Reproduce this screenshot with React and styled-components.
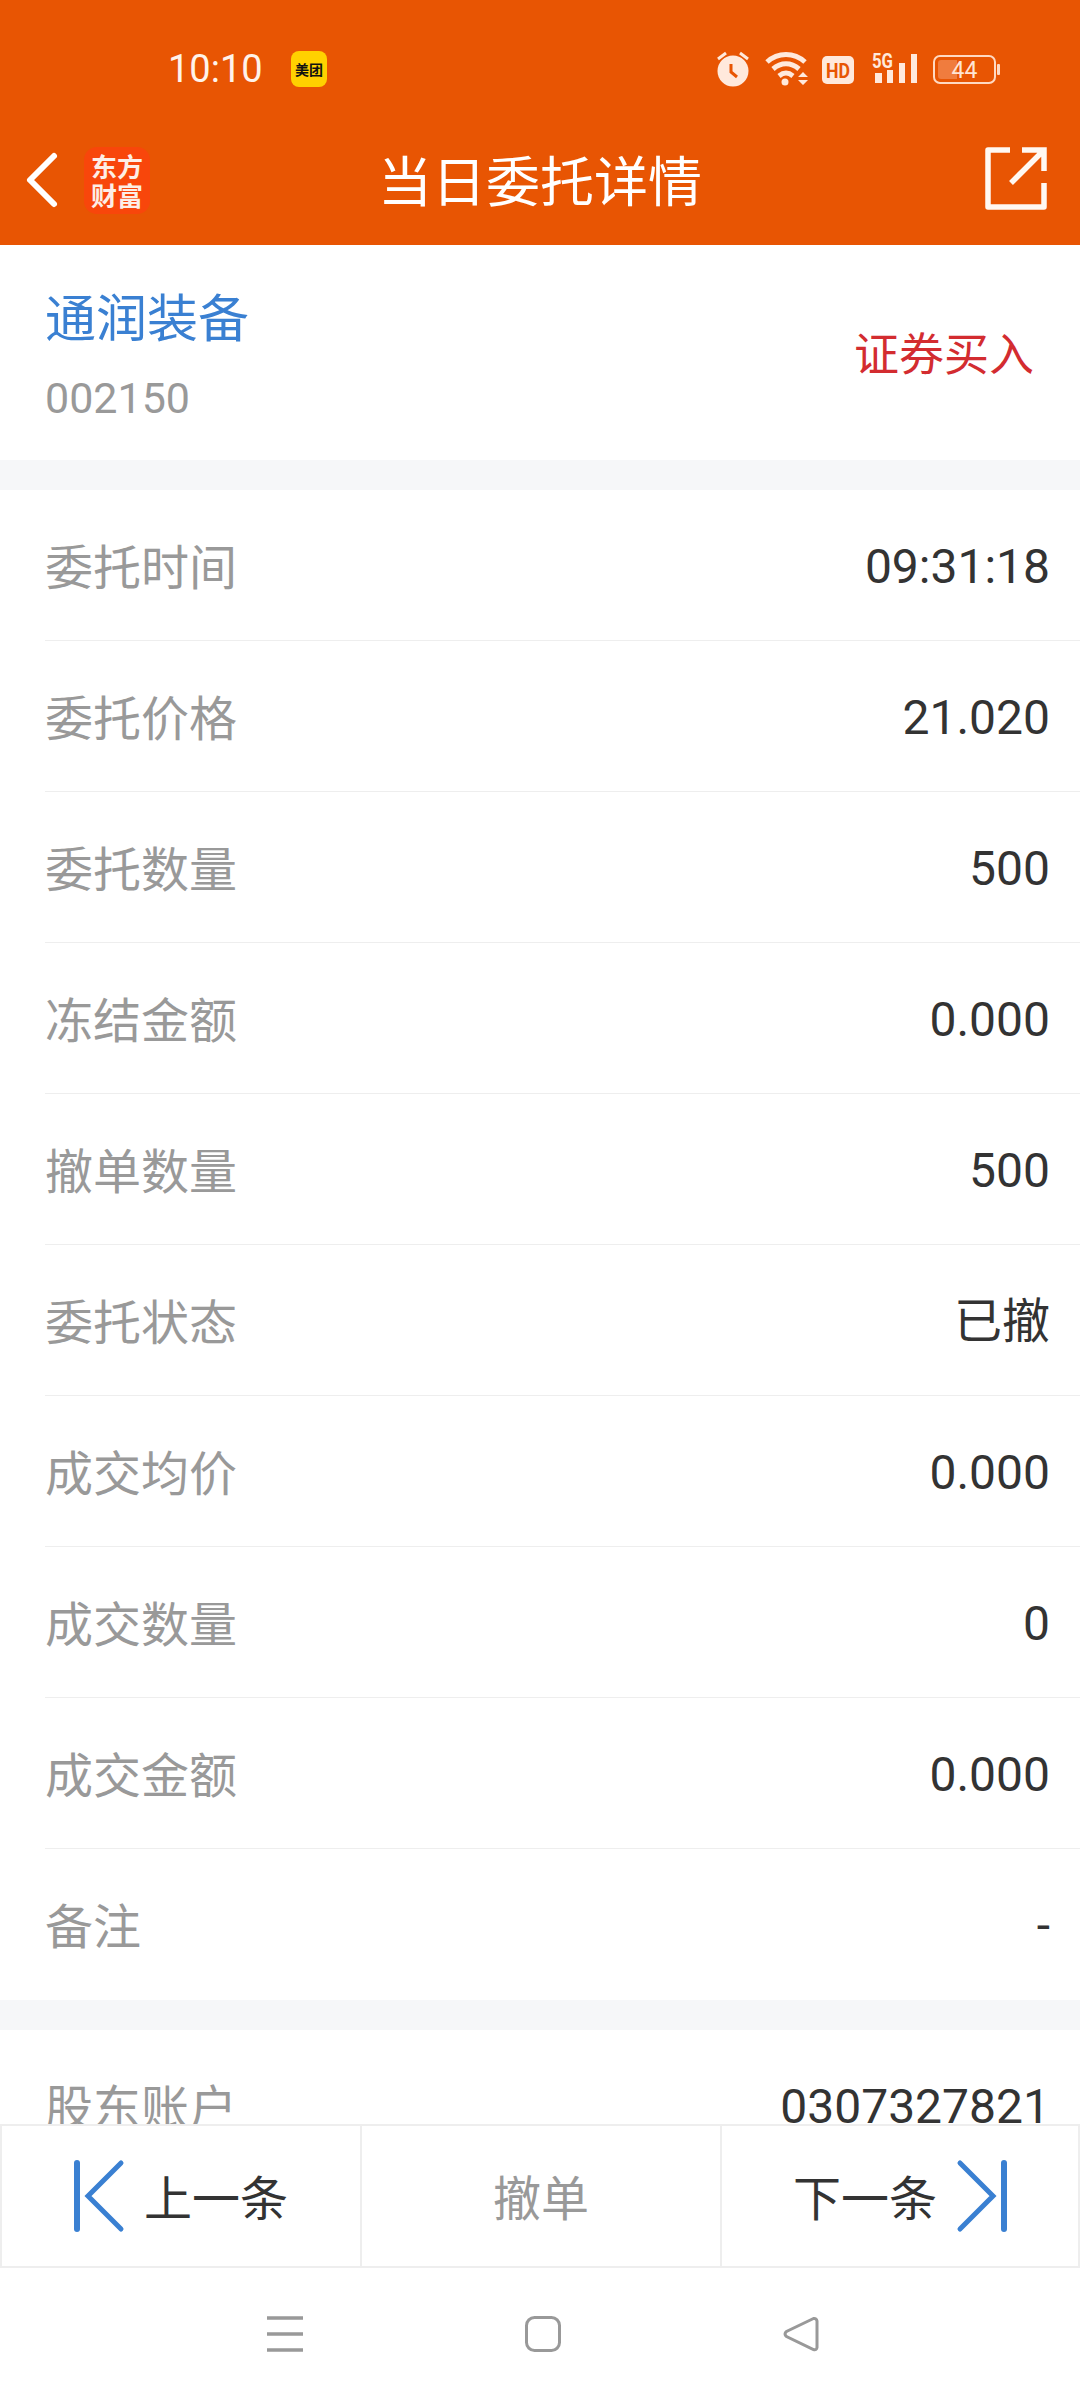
import React from 'react'
import styled, { createGlobalStyle } from 'styled-components'

const GlobalStyle = createGlobalStyle`
  html, body { margin: 0; padding: 0; background: #fff; }
  body { font-family: Roboto, "Noto Sans CJK SC", sans-serif; }
  svg { overflow: visible; }
`
const Page = styled.div`
  width: 1080px;
  height: 2400px;
  display: flex;
  flex-direction: column;
  overflow: hidden;
  background: #fff;
`
const Header = styled.header`
  height: 245px;
  flex: none;
  background: #e85503;
  color: #fff;
`
const StatusBar = styled.div`
  height: 115px;
  display: flex;
  align-items: flex-start;
  padding: 51px 0 0 168px;
  box-sizing: border-box;
`
const Clock = styled.span`
  font-size: 38px;
  line-height: 36px;
  width: 123px;
  color: #fff3ea;
`
const AppBadge = styled.span`
  width: 36px;
  height: 36px;
  border-radius: 8px;
  background: #ffd100;
  color: #111;
  font-size: 14px;
  font-weight: 700;
  line-height: 36px;
  text-align: center;
  white-space: nowrap;
  font-family: "Noto Sans CJK SC", sans-serif;
`
const StatusIcons = styled.div`
  margin-left: auto;
  margin-right: 80px;
  display: flex;
  align-items: flex-start;
  height: 36px;
`
const ToolBar = styled.div`
  height: 130px;
  display: grid;
  grid-template-columns: 1fr auto 1fr;
  align-items: center;
`
const ToolLeft = styled.div`
  display: flex;
  align-items: center;
  padding-left: 27px;
  gap: 27px;
`
const BrandLogo = styled.div`
  width: 66px;
  height: 67px;
  border-radius: 13px;
  background: #f8460b;
  color: #fdeee6;
  font: 700 26px/29px "Noto Sans CJK SC", sans-serif;
  text-align: center;
  white-space: pre-line;
  padding-top: 4px;
  box-sizing: border-box;
`
const Title = styled.h1`
  margin: 0 0 2px;
  font: 400 54px/64px "Noto Sans CJK SC", sans-serif;
  color: #fff;
`
const ToolRight = styled.div`
  display: flex;
  justify-content: flex-end;
  padding: 0 33px 4px 0;
`
const Scroll = styled.main`
  flex: 1;
  min-height: 0;
  overflow: hidden;
`
const StockCard = styled.section`
  height: 215px;
  display: flex;
  align-items: center;
  justify-content: space-between;
  padding: 0 45px;
  box-sizing: border-box;
`
const StockName = styled.div`
  font: 400 51px/60px "Noto Sans CJK SC", sans-serif;
  color: #3a80d2;
  padding-top: 2px;
  margin-bottom: 4px;
`
const StockCode = styled.div`
  font-size: 43px;
  line-height: 50px;
  margin-top: 28px;
  color: #999;
`
const TradeType = styled.div`
  font: 400 45px/52px "Noto Sans CJK SC", sans-serif;
  color: #d32c30;
  margin-right: 1px;
  padding-bottom: 2px;
`
const Gap = styled.div`
  height: ${p => p.$h}px;
  background: #f6f7f9;
`
const Row = styled.div`
  height: 151px;
  box-sizing: border-box;
  margin-left: 45px;
  display: flex;
  align-items: center;
  justify-content: space-between;
  padding-right: 30px;
  border-bottom: 1px solid ${p => (p.$last ? 'transparent' : '#eeeeee')};
`
const Label = styled.span`
  font: 400 48px/60px "Noto Sans CJK SC", sans-serif;
  color: #999;
  padding-bottom: 2px;
`
const Value = styled.span`
  font: 400 48px/60px Roboto, "Noto Sans CJK SC", sans-serif;
  color: #333;
  padding-top: 3px;
`
const ActionBar = styled.div`
  height: 144px;
  flex: none;
  display: grid;
  grid-template-columns: repeat(3, 1fr);
  background: #fff;
  border: solid #eee;
  border-width: 2px 0;
  box-sizing: border-box;
`
const ActionCell = styled.div`
  display: flex;
  align-items: center;
  justify-content: center;
  gap: ${p => (p.$icon ? 20 : 0)}px;
  color: ${p => (p.$muted ? '#999' : '#333')};
  border-left: 2px solid #eee;
  &:last-child { border-right: 2px solid #eee; }
`
const ActionText = styled.span`
  font: 400 48px/60px "Noto Sans CJK SC", sans-serif;
  padding-bottom: 3px;
`
const NavBar = styled.nav`
  height: 132px;
  flex: none;
  display: flex;
  align-items: flex-start;
  justify-content: center;
  gap: 222px;
  padding: 48px 0 0 6px;
  box-sizing: border-box;
`

const Alarm = () => (
  <svg width="34" height="36" viewBox="0 0 34 36" style={{ marginRight: 14 }}>
    <circle cx="16" cy="20" r="15.5" fill="#ffe9dc" />
    <path d="M14 13v8l6 5" fill="none" stroke="#e85503" strokeWidth="3" />
    <path d="M1 8l8-6M31 8l-8-6" stroke="#ffe9dc" strokeWidth="3" />
  </svg>
)
const Wifi = () => (
  <svg width="46" height="36" viewBox="0 0 46 36" style={{ marginRight: 11 }}>
    <path d="M2 11C13 1 29 1 40 11M8 18c8-7 18-7 26 0M14 25c5-4 9-4 14 0" fill="none" stroke="#ffe9dc" strokeWidth="5" />
    <circle cx="20" cy="31" r="3.5" fill="#ffe9dc" />
    <path d="M33 26l5-5 5 5zM33 29l5 5 5-5z" fill="#ffe9dc" />
  </svg>
)
const HdBadge = () => (
  <svg width="32" height="28" viewBox="0 0 32 28" style={{ marginTop: 5, marginRight: 16 }}>
    <rect width="32" height="28" rx="5" fill="#ffe9dc" />
    <text x="16" y="21.5" fontFamily="Roboto" fontWeight="700" fontSize="21" textAnchor="middle" textLength="24" lengthAdjust="spacingAndGlyphs" fill="#e85503">HD</text>
  </svg>
)
const Signal = () => (
  <svg width="47" height="36" viewBox="0 0 47 36" style={{ marginRight: 16 }}>
    <text x="2" y="17" fontFamily="Roboto" fontWeight="700" fontSize="21" textLength="21" lengthAdjust="spacingAndGlyphs" fill="#ffe9dc">5G</text>
    <path d="M5 22h7v10H5zM17 19h6v13h-6zM29 12h6v20h-6zM41 3h6v29h-6z" fill="#ffe9dc" />
  </svg>
)
const Battery = () => (
  <svg width="67" height="32" viewBox="0 0 67 32" style={{ marginTop: 3 }}>
    <rect x="1" y="2" width="61" height="27" rx="6" fill="none" stroke="#ffd9c2" strokeWidth="2" />
    <path d="M8 6h16v19H8a3 3 0 0 1-3-3V9a3 3 0 0 1 3-3z" fill="#f07c3e" />
    <text x="31.5" y="24" fontFamily="Roboto" fontSize="23" textAnchor="middle" fill="#ffe4d4">44</text>
    <rect x="64" y="10" width="3" height="11" rx="1" fill="#ffd9c2" />
  </svg>
)
const BackIcon = () => (
  <svg width="30" height="54" viewBox="0 0 30 54">
    <path d="M27 3L3 27l24 24" fill="none" stroke="#fff" strokeWidth="6" strokeLinecap="round" strokeLinejoin="round" />
  </svg>
)
const ShareIcon = () => (
  <svg width="62" height="63" viewBox="0 0 62 63">
    <path d="M25 3H3v57h56V36" fill="none" stroke="#fff8f2" strokeWidth="5.5" strokeLinejoin="round" />
    <path d="M26 36L58 4M37 3h22v21" fill="none" stroke="#fff8f2" strokeWidth="5.5" />
  </svg>
)
const PrevIcon = () => (
  <svg width="50" height="72" viewBox="0 0 50 72">
    <path d="M3 3v66" stroke="#3a80d2" strokeWidth="6" strokeLinecap="round" />
    <path d="M47 3L14 36l33 33" fill="none" stroke="#3a80d2" strokeWidth="5" strokeLinecap="round" />
  </svg>
)
const NextIcon = () => (
  <svg width="50" height="72" viewBox="0 0 50 72">
    <path d="M47 3v66" stroke="#3a80d2" strokeWidth="6" strokeLinecap="round" />
    <path d="M3 3l33 33-33 33" fill="none" stroke="#3a80d2" strokeWidth="5" strokeLinecap="round" />
  </svg>
)
const MenuIcon = () => (
  <svg width="36" height="36" viewBox="0 0 36 36">
    <path d="M0 2h36M0 18h36M0 34h36" stroke="#999" strokeWidth="3.5" />
  </svg>
)
const HomeIcon = () => (
  <svg width="36" height="36" viewBox="0 0 36 36">
    <rect x="1.5" y="1.5" width="33" height="33" rx="8" fill="none" stroke="#999" strokeWidth="3" />
  </svg>
)
const BackNavIcon = () => (
  <svg width="36" height="36" viewBox="0 0 36 36">
    <path d="M30.5 2.5L3.5 15.5q-3 2.5 0 5l27 13q3 1 3.5-2V5q-.5-3-3.5-2.5z" fill="none" stroke="#999" strokeWidth="3" />
  </svg>
)

const rows = [
  ['委托时间', '09:31:18'],
  ['委托价格', '21.020'],
  ['委托数量', '500'],
  ['冻结金额', '0.000'],
  ['撤单数量', '500'],
  ['委托状态', '已撤'],
  ['成交均价', '0.000'],
  ['成交数量', '0'],
  ['成交金额', '0.000'],
  ['备注', '-'],
]

export default function App() {
  return (
    <Page>
      <GlobalStyle />
      <Header>
        <StatusBar>
          <Clock>10:10</Clock>
          <AppBadge>美团</AppBadge>
          <StatusIcons>
            <Alarm />
            <Wifi />
            <HdBadge />
            <Signal />
            <Battery />
          </StatusIcons>
        </StatusBar>
        <ToolBar>
          <ToolLeft>
            <BackIcon />
            <BrandLogo>{'东方\n财富'}</BrandLogo>
          </ToolLeft>
          <Title>当日委托详情</Title>
          <ToolRight>
            <ShareIcon />
          </ToolRight>
        </ToolBar>
      </Header>
      <Scroll>
        <StockCard>
          <div>
            <StockName>通润装备</StockName>
            <StockCode>002150</StockCode>
          </div>
          <TradeType>证券买入</TradeType>
        </StockCard>
        <Gap $h={30} />
        {rows.map(([label, value], i) => (
          <Row key={label} $last={i === rows.length - 1}>
            <Label>{label}</Label>
            <Value>{value}</Value>
          </Row>
        ))}
        <Gap $h={30} />
        <Row>
          <Label>股东账户</Label>
          <Value>0307327821</Value>
        </Row>
      </Scroll>
      <ActionBar>
        <ActionCell $icon>
          <PrevIcon />
          <ActionText>上一条</ActionText>
        </ActionCell>
        <ActionCell $muted>
          <ActionText>撤单</ActionText>
        </ActionCell>
        <ActionCell $icon>
          <ActionText>下一条</ActionText>
          <NextIcon />
        </ActionCell>
      </ActionBar>
      <NavBar>
        <MenuIcon />
        <HomeIcon />
        <BackNavIcon />
      </NavBar>
    </Page>
  )
}
